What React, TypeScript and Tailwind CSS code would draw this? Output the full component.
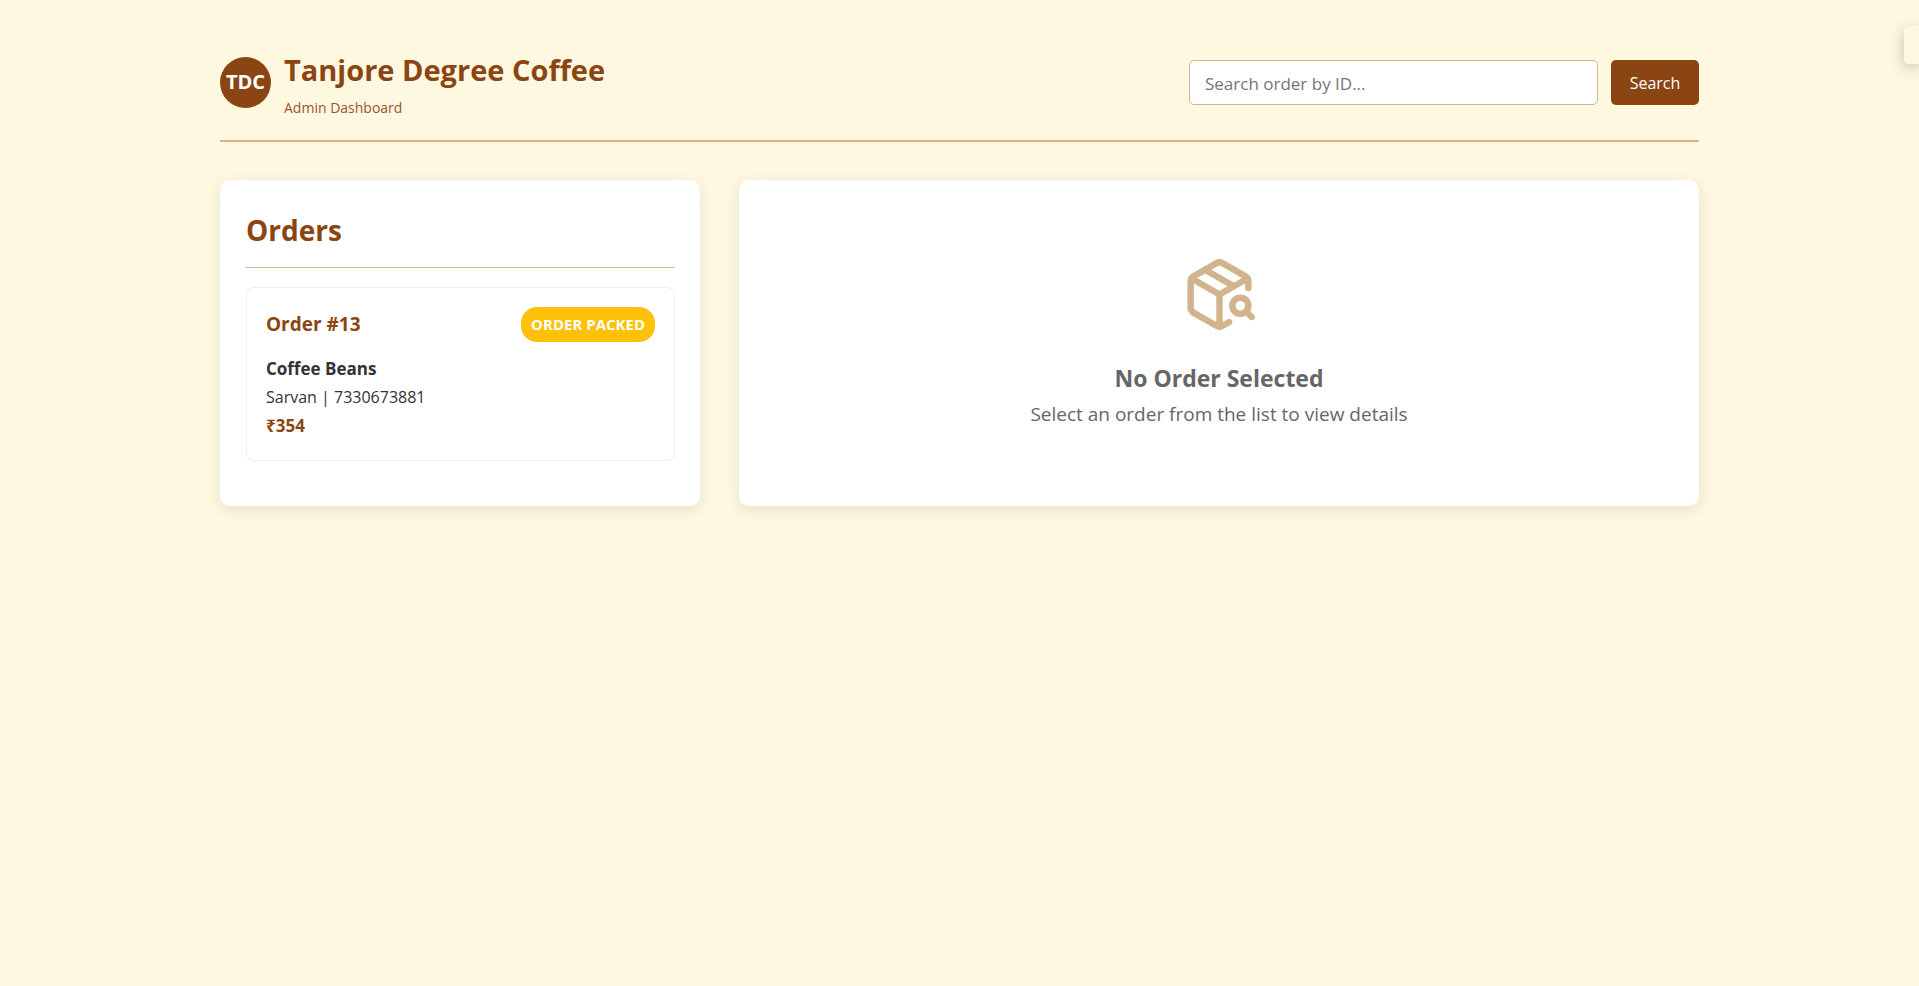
import { useState } from "react";
import { PackageSearch } from "lucide-react";

type Order = {
  id: number;
  status: string;
  product: string;
  customer: string;
  phone: string;
  total: number;
};

const orders: Order[] = [
  { id: 13, status: "Order Packed", product: "Coffee Beans", customer: "Sarvan", phone: "7330673881", total: 354 },
];

function Header() {
  const [query, setQuery] = useState("");
  return (
    <header className="flex flex-wrap items-center justify-between gap-5 border-b-2 border-[#d2b48c] pb-5">
      <div className="flex items-center gap-[13px]">
        <div className="flex size-[51px] shrink-0 items-center justify-center rounded-full bg-[#8b4513] text-[20px] font-bold text-white">
          TDC
        </div>
        <div>
          <h1 className="text-[29px] leading-[51px] font-bold text-[#8b4513]">Tanjore Degree Coffee</h1>
          <p className="text-sm leading-[25px] text-[#a0522d]">Admin Dashboard</p>
        </div>
      </div>
      <form className="flex w-full max-w-[510px] gap-[13px]" onSubmit={(e) => e.preventDefault()}>
        <input
          type="text"
          aria-label="Search order by ID"
          placeholder="Search order by ID..."
          value={query}
          onChange={(e) => setQuery(e.target.value)}
          className="h-[45px] min-w-0 flex-1 rounded-[5px] border border-[#d2b48c] bg-white px-[15px] pt-0.5 text-[17px] text-[#333] placeholder:text-[#757575]"
        />
        <button type="submit" className="h-[45px] w-[88px] rounded-[5px] bg-[#8b4513] pt-0.5 text-base text-white">
          Search
        </button>
      </form>
    </header>
  );
}

function OrderCard({ order }: { order: Order }) {
  return (
    <li className="rounded-lg border border-[#eee] px-[19px] pt-[19px] pb-5">
      <div className="mb-3 flex items-center justify-between">
        <h3 className="text-[19px] leading-[35px] font-bold text-[#8b4513]">Order #{order.id}</h3>
        <span className="rounded-2xl bg-[#ffc107] px-[10px] text-[15px] leading-[35px] font-bold text-white uppercase">
          {order.status}
        </span>
      </div>
      <div className="text-base leading-[29px] text-[#333]">
        <p className="text-[17px] leading-[29px] font-bold">{order.product}</p>
        <p>
          {order.customer} | {order.phone}
        </p>
        <p className="text-[17px] leading-[28px] font-bold text-[#8b4513]">₹{order.total}</p>
      </div>
    </li>
  );
}

export default function App() {
  return (
    <div className="min-h-screen bg-[#fff8e1] px-5 pt-11 font-['Open_Sans','Noto_Sans',sans-serif] text-[#333]">
      <div className="mx-auto max-w-[1479px]">
        <Header />
        <main className="mt-[38px] grid grid-cols-1 gap-[39px] lg:grid-cols-[1fr_2fr]">
          <section className="rounded-[10px] bg-white pt-[26px] pr-[25px] pb-[45px] pl-[26px] shadow-[0_4px_15px_rgba(0,0,0,0.1)]">
            <h2 className="mb-[19px] border-b border-[#d2b48c] pb-3 text-[28px] leading-[49px] font-bold text-[#8b4513]">
              Orders
            </h2>
            <ul>
              {orders.map((order) => (
                <OrderCard key={order.id} order={order} />
              ))}
            </ul>
          </section>
          <section className="flex flex-col items-center justify-center rounded-[10px] bg-white p-6 text-center text-[#666] shadow-[0_4px_15px_rgba(0,0,0,0.1)]">
            <PackageSearch className="mb-[25px] size-[77px] text-[#d2b48c]" />
            <h3 className="text-[23px] leading-10 font-bold">No Order Selected</h3>
            <p className="text-[19px] leading-8">Select an order from the list to view details</p>
          </section>
        </main>
      </div>
      <div className="fixed top-[26px] right-0 h-[38px] w-[15px] rounded-l-[5px] bg-[#fff8e1] shadow-[0_4px_15px_rgba(0,0,0,0.25)]" />
    </div>
  );
}
